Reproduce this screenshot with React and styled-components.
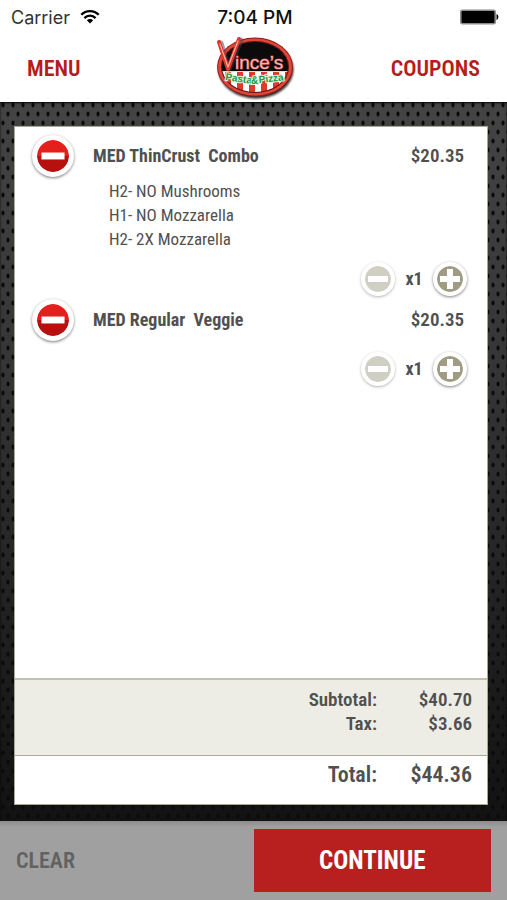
import { useState } from "react";
import styled, { createGlobalStyle, css } from "styled-components";

const condensed = `"Roboto Condensed", "Liberation Sans Narrow", Roboto, sans-serif`;

const initialItems = [
  {
    id: 1,
    name: "MED ThinCrust  Combo",
    price: 20.35,
    quantity: 1,
    options: ["H2- NO Mushrooms", "H1- NO Mozzarella", "H2- 2X Mozzarella"],
  },
  { id: 2, name: "MED Regular  Veggie", price: 20.35, quantity: 1, options: [] },
];

const TAX_RATE = 0.09;

const money = (value) => `$${value.toFixed(2)}`;

function App() {
  const [items, setItems] = useState(initialItems);

  const subtotal = items.reduce((sum, i) => sum + i.price * i.quantity, 0);
  const tax = subtotal * TAX_RATE;

  const changeQuantity = (id, amount) => {
    setItems(
      items.map((item) =>
        item.id === id ? { ...item, quantity: item.quantity + amount } : item
      )
    );
  };

  const removeItem = (id) => setItems(items.filter((item) => item.id !== id));

  return (
    <>
      <GlobalStyle />
      <Page>
        <StatusBar>
          <Carrier>
            Carrier
            <WifiIcon />
          </Carrier>
          <Clock>7:04 PM</Clock>
          <BatteryIcon />
        </StatusBar>
        <Header>
          <HeaderLink href="#menu">MENU</HeaderLink>
          <Logo />
          <HeaderLink href="#coupons" $right>
            COUPONS
          </HeaderLink>
        </Header>
        <Main>
          <Order>
            <ItemList>
              {items.map((item) => (
                <Item key={item.id}>
                  <ItemRow>
                    <RemoveButton
                      aria-label={`Remove ${item.name}`}
                      onClick={() => removeItem(item.id)}
                    >
                      <Sign />
                    </RemoveButton>
                    <ItemName>{item.name}</ItemName>
                    <Price>{money(item.price)}</Price>
                  </ItemRow>
                  {item.options.length > 0 && (
                    <Options>
                      {item.options.map((option) => (
                        <li key={option}>{option}</li>
                      ))}
                    </Options>
                  )}
                  <Quantity>
                    <StepButton
                      aria-label="Decrease quantity"
                      disabled={item.quantity === 1}
                      onClick={() => changeQuantity(item.id, -1)}
                    >
                      <Sign />
                    </StepButton>
                    <Count>x{item.quantity}</Count>
                    <StepButton
                      aria-label="Increase quantity"
                      onClick={() => changeQuantity(item.id, 1)}
                    >
                      <Sign plus />
                    </StepButton>
                  </Quantity>
                </Item>
              ))}
            </ItemList>
            <Subtotals>
              <Line>
                <dt>Subtotal:</dt>
                <dd>{money(subtotal)}</dd>
              </Line>
              <Line>
                <dt>Tax:</dt>
                <dd>{money(tax)}</dd>
              </Line>
            </Subtotals>
            <Total>
              <Line $large>
                <dt>Total:</dt>
                <dd>{money(subtotal + tax)}</dd>
              </Line>
            </Total>
          </Order>
        </Main>
        <Footer>
          <ClearButton onClick={() => setItems([])}>CLEAR</ClearButton>
          <ContinueButton>CONTINUE</ContinueButton>
        </Footer>
      </Page>
    </>
  );
}

function Sign({ plus }) {
  return (
    <svg viewBox="0 0 26 26" width="100%" height="100%" aria-hidden="true">
      <rect x="3" y="10" width="20" height="6" fill="#fff" />
      {plus && <rect x="10" y="3" width="6" height="20" fill="#fff" />}
    </svg>
  );
}

function WifiIcon() {
  return (
    <svg width="20" height="16" viewBox="0 0 20 16" aria-hidden="true">
      <g fill="none" stroke="#000" strokeWidth="2.3">
        <path d="M1.3 5.8 C6 0.8 14 0.8 18.7 5.8" />
        <path d="M4.4 9.1 C7.5 5.9 12.5 5.9 15.6 9.1" />
      </g>
      <path d="M6.8 11.3 C8.6 9.6 11.4 9.6 13.2 11.3 L10 14.6 Z" />
    </svg>
  );
}

function BatteryIcon() {
  return (
    <Battery width="39" height="16" viewBox="0 0 39 16" aria-hidden="true">
      <rect x="0" y="0.5" width="36" height="15" rx="2.5" fill="#8c8c8c" />
      <rect x="1.6" y="2.1" width="32.8" height="11.8" rx="0.8" fill="#000" />
      <path d="M36.5 5 C39 6 39 10 36.5 11 Z" fill="#000" />
    </Battery>
  );
}

function Logo() {
  return (
    <svg width="82" height="66" viewBox="0 0 82 66" role="img">
      <defs>
        <clipPath id="plate">
          <ellipse cx="42" cy="32" rx="33" ry="25" />
        </clipPath>
        <filter id="soft" x="-20%" y="-20%" width="140%" height="140%">
          <feGaussianBlur stdDeviation="1.3" />
        </filter>
        <pattern id="stripes" width="12" height="40" patternUnits="userSpaceOnUse">
          <rect width="12" height="40" fill="#fff" />
          <rect width="6" height="40" fill="#df3a2b" />
        </pattern>
      </defs>
      <ellipse cx="43" cy="34.5" rx="37.5" ry="29" fill="#1c0a08" opacity="0.9" filter="url(#soft)" />
      <ellipse cx="42" cy="32" rx="38" ry="29.5" fill="#8f1d17" />
      <ellipse cx="42" cy="32" rx="37" ry="28.5" fill="#e2443a" />
      <ellipse cx="42" cy="32" rx="34" ry="26" fill="#5c1510" />
      <g clipPath="url(#plate)">
        <rect x="4" y="4" width="78" height="34" fill="#0b0b0b" />
        <rect x="4" y="37" width="78" height="26" fill="url(#stripes)" />
        <rect x="4" y="36" width="78" height="1" fill="#ddd" />
      </g>
      <text
        x="22"
        y="34"
        fontFamily='"Liberation Sans", sans-serif'
        fontSize="19"
        fill="#f4b5ae"
        stroke="#a83430"
        strokeWidth="1.2"
        paintOrder="stroke"
      >
        ince’s
      </text>
      <g fill="none" strokeLinecap="round" strokeLinejoin="round">
        <path d="M8 8 L16 34 L28 5" stroke="#444" strokeWidth="5" opacity="0.5" />
        <path d="M6 7 L15 34 L26 4" stroke="#e2372d" strokeWidth="4" />
        <path d="M7 9 L15 32 L25 6" stroke="#f7b6ae" strokeWidth="1.1" />
      </g>
      <g
        fontFamily='"Liberation Sans", sans-serif'
        fontWeight="700"
        fontSize="10"
        fill="#1f9a42"
        stroke="#e6f2e0"
        strokeWidth="2"
        paintOrder="stroke"
      >
        <text transform="translate(12 45) rotate(8)">Pasta</text>
        <text x="38" y="49">&amp;</text>
        <text transform="translate(46 48) rotate(-6)">Pizza</text>
      </g>
    </svg>
  );
}

const GlobalStyle = createGlobalStyle`
  * {
    box-sizing: border-box;
    margin: 0;
    padding: 0;
  }

  body {
    background-color: #fff;
    color: #505050;
    font-family: ${condensed};
  }

  button {
    border: none;
    font-family: inherit;
    cursor: pointer;
  }
`;

const perforated = css`
  background-image: radial-gradient(ellipse 2px 3px at 3px 3px, #0a0a0a 55%, transparent),
    radial-gradient(ellipse 2px 3px at 8px 12px, #0a0a0a 55%, transparent),
    linear-gradient(#444, #363636 35%, #1c1c1c 80%, #121212);
  background-size: 10px 18px, 10px 18px, 100% 100%;
`;

const Page = styled.div`
  min-height: 100vh;
  display: flex;
  flex-direction: column;
`;

const StatusBar = styled.div`
  height: 34px;
  padding: 0 8px 0 11px;
  display: grid;
  grid-template-columns: 1fr auto 1fr;
  align-items: center;
  font-family: Inter, sans-serif;
  font-size: 18px;
  color: #333;
`;

const Carrier = styled.div`
  display: flex;
  align-items: center;
  gap: 10px;
`;

const Clock = styled.time`
  font-size: 19px;
  font-weight: 500;
  color: #111;
`;

const Battery = styled.svg`
  justify-self: end;
`;

const Header = styled.header`
  height: 68px;
  padding: 0 27px;
  display: grid;
  grid-template-columns: 1fr auto 1fr;
  align-items: center;
`;

const HeaderLink = styled.a`
  justify-self: ${({ $right }) => ($right ? "end" : "start")};
  font-size: 22px;
  font-weight: 600;
  color: #b71c1c;
  text-decoration: none;
`;

const Main = styled.main`
  flex: 1;
  padding: 24px 19px 16px 14px;
  display: flex;
  box-shadow: inset 0 1px 2px #000;
  ${perforated}
`;

const Order = styled.section`
  flex: 1;
  display: flex;
  flex-direction: column;
  background-color: #fff;
  border: 1px solid #a9a98f;
`;

const ItemList = styled.ul`
  flex: 1;
  padding: 8px 20px 0 17px;
  list-style: none;
`;

const Item = styled.li`
  margin-bottom: 3px;
`;

const ItemRow = styled.div`
  display: flex;
  align-items: center;
`;

const roundButton = css`
  display: flex;
  flex-shrink: 0;
  border-radius: 50%;
  border: solid #fff;
  background-clip: padding-box;
  box-shadow: 0 1px 3px rgba(0, 0, 0, 0.5);
`;

const RemoveButton = styled.button`
  ${roundButton}
  width: 42px;
  height: 42px;
  padding: 1px;
  border-width: 5px;
  background-image: linear-gradient(#e5201c 50%, #b80f0f 50%);
`;

const ItemName = styled.h2`
  flex: 1;
  margin-left: 19px;
  font-size: 18px;
  line-height: 24px;
  font-weight: 700;
  white-space: pre;
`;

const Price = styled.span`
  padding-right: 3px;
  font-size: 19px;
  line-height: 24px;
  font-weight: 600;
`;

const Options = styled.ul`
  padding-top: 2px;
  padding-left: 77px;
  list-style: none;
  font-size: 17px;
  line-height: 24px;
`;

const Quantity = styled.div`
  margin-top: 11px;
  display: flex;
  align-items: center;
  justify-content: flex-end;
`;

const StepButton = styled.button`
  ${roundButton}
  width: 34px;
  height: 34px;
  border-width: 4px;
  background-color: #a09c84;

  &:disabled {
    background-color: #d0cfc4;
    box-shadow: 0 1px 3px rgba(0, 0, 0, 0.3);
    cursor: default;
  }
`;

const Count = styled.span`
  width: 38px;
  text-align: center;
  font-size: 18px;
  line-height: 24px;
  font-weight: 700;
`;

const Subtotals = styled.dl`
  height: 78px;
  padding: 8px 15px 0;
  background-color: #eeede5;
  border-top: 2px solid #c2c1ac;
  border-bottom: 1px solid #a9a99d;
`;

const Total = styled.dl`
  height: 48px;
  padding: 5px 15px 0;
`;

const Line = styled.div`
  display: flex;
  justify-content: flex-end;
  font-size: ${({ $large }) => ($large ? "22px" : "19px")};
  line-height: ${({ $large }) => ($large ? "28px" : "24px")};
  font-weight: 600;

  dd {
    width: 95px;
    text-align: right;
  }
`;

const Footer = styled.footer`
  padding: 8px 16px;
  display: flex;
  background: linear-gradient(#8c8c8c, #a0a0a0 6px);
`;

const ClearButton = styled.button`
  flex: 1;
  background: none;
  text-align: left;
  font-size: 22px;
  font-weight: 600;
  color: #626262;
`;

const ContinueButton = styled.button`
  flex: 1;
  height: 63px;
  background-color: #b7201f;
  font-size: 25px;
  font-weight: 700;
  color: #fff;
`;

export default App;
